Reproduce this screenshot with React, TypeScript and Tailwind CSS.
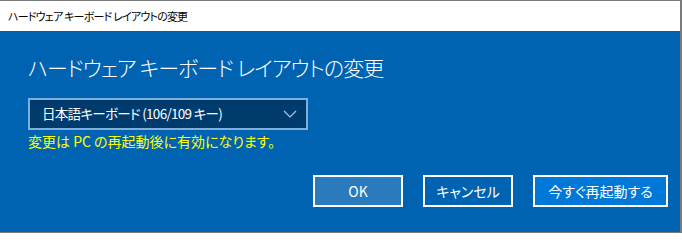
import React from "react";

const jp = "[font-family:'Noto_Sans_CJK_JP','Noto_Sans',sans-serif] [font-feature-settings:'palt']";

export default function App() {
  return (
    <div className={`w-[682px] h-[233px] flex flex-col border-t border-b border-r-2 border-[#7a7a7a] bg-[#0063b1] ${jp}`}>
      <div className="h-[30px] shrink-0 bg-white flex items-center pl-[8px] text-[11px] tracking-[-0.8px] text-black leading-none">
        ハードウェア キーボード レイアウトの変更
      </div>
      <div className="flex-1 flex flex-col pl-[28px] pr-[12px] pt-[22px]">
        <div className="text-white text-[21px] tracking-[-0.9px] leading-[28px] font-light">
          ハードウェア キーボード レイアウトの変更
        </div>
        <div className="mt-[17px] w-[280px] h-[32px] border-2 border-[#7fb0dc] bg-[#003b6e] flex items-center justify-between pl-[12px] pr-[8px]">
          <span className="text-white text-[13.5px] tracking-[-0.7px] leading-none">日本語キーボード (106/109 キー)</span>
          <svg width="14" height="8" viewBox="0 0 14 8" className="mr-[1px]">
            <polyline points="1,1 7,7 13,1" fill="none" stroke="#a9c7e6" strokeWidth="1.2" />
          </svg>
        </div>
        <div className="mt-[1px] text-[#ffff00] text-[14px] leading-[20px]">
          変更は PC の再起動後に有効になります。
        </div>
        <div className="mt-[24px] flex justify-end gap-[20px]">
          <button className="w-[90px] h-[32px] border-2 border-white bg-[#2a7bbd] text-white text-[14px] leading-none">
            OK
          </button>
          <button className="w-[90px] h-[32px] border-2 border-white bg-[#0063b1] text-white text-[14px] leading-none">
            キャンセル
          </button>
          <button className="w-[135px] h-[32px] border-2 border-white bg-[#0078d7] text-white text-[14px] leading-none">
            今すぐ再起動する
          </button>
        </div>
      </div>
    </div>
  );
}
